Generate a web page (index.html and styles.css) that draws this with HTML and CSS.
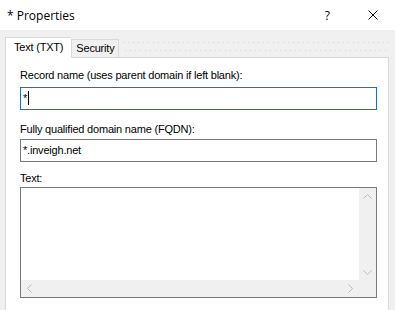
FILE: index.html
```html
<!DOCTYPE html>
<html lang="en">
<head>
    <meta charset="UTF-8">
    <title>* Properties</title>
    <link rel="stylesheet" href="styles.css">
</head>
<body>
    <div class="titlebar">
        <span class="title">* Properties</span>
        <span class="help">?</span>
        <svg class="close" viewBox="0 0 10 10" width="10" height="10">
            <path d="M0.5 0.5L9.5 9.5M9.5 0.5L0.5 9.5" stroke="#000" stroke-width="1" fill="none"/>
        </svg>
    </div>

    <div class="dialog">
        <div class="tabs">
            <div class="tab active">Text (TXT)</div>
            <div class="tab">Security</div>
            <div class="tab-fill"></div>
        </div>

        <div class="page">
            <label class="field-label">Record name (uses parent domain if left blank):</label>
            <div class="input focused">*<span class="caret"></span></div>

            <label class="field-label fqdn">Fully qualified domain name (FQDN):</label>
            <div class="input">*.inveigh.net</div>

            <label class="field-label text">Text:</label>
            <div class="textbox">
                <div class="text-area"></div>
                <div class="vscroll">
                    <svg viewBox="0 0 9 5" width="9" height="5"><path d="M0.5 4.5L4.5 0.5L8.5 4.5" stroke="#b9bdbd" fill="none"/></svg>
                    <svg viewBox="0 0 9 5" width="9" height="5"><path d="M0.5 0.5L4.5 4.5L8.5 0.5" stroke="#b9bdbd" fill="none"/></svg>
                </div>
                <div class="hscroll">
                    <svg viewBox="0 0 5 9" width="5" height="9"><path d="M4.5 0.5L0.5 4.5L4.5 8.5" stroke="#b9bdbd" fill="none"/></svg>
                    <svg viewBox="0 0 5 9" width="5" height="9"><path d="M0.5 0.5L4.5 4.5L0.5 8.5" stroke="#b9bdbd" fill="none"/></svg>
                </div>
                <div class="corner"></div>
            </div>
        </div>
    </div>
</body>
</html>
```

FILE: styles.css
```css
body {
    margin: 0;
    width: 395px;
    height: 310px;
    overflow: hidden;
    display: flex;
    flex-direction: column;
    font-family: "Liberation Sans", Arial, sans-serif;
    font-size: 11px;
    letter-spacing: -0.2px;
    color: #000;
    background-color: #f0f0f0;
}

.titlebar {
    height: 30px;
    flex-shrink: 0;
    background-color: #fff;
    display: flex;
    align-items: center;
    letter-spacing: 0;
}

.title {
    font-family: "Open Sans", "Noto Sans", sans-serif;
    font-size: 12px;
    padding-left: 7px;
    flex: 1;
}

.help {
    font-family: "Open Sans", "Noto Sans", sans-serif;
    font-size: 12px;
    margin-right: 38px;
}

.close {
    margin-right: 17px;
}

.dialog {
    flex: 1;
    display: flex;
    flex-direction: column;
    padding: 7px 6px 0 5px;
    min-height: 0;
}

.tabs {
    display: flex;
    align-items: flex-end;
    height: 21px;
    margin-bottom: -1px;
    position: relative;
    z-index: 1;
}

.tab {
    height: 17px;
    line-height: 17px;
    padding: 0 4px;
    border: 1px solid #d9d9d9;
    border-bottom: none;
    background-color: #f0f0f0;
    margin-bottom: 1px;
}

.tab.active {
    height: 20px;
    line-height: 18px;
    padding: 0 8px;
    background-color: #fff;
    margin-bottom: 0;
    border-right: none;
}

.tab-fill {
    flex: 1;
    align-self: stretch;
    margin: 5px 0 4px 4px;
    background-image:
        linear-gradient(90deg, #d6d6d6 1px, transparent 1px),
        linear-gradient(90deg, #d6d6d6 1px, transparent 1px);
    background-size: 5px 1px, 5px 1px;
    background-position: 0 0, 2px 8px;
    background-repeat: repeat-x;
}

.page {
    flex: 1;
    background-color: #fff;
    border: 1px solid #d9d9d9;
    border-bottom: none;
    padding: 10px 11px 0 14px;
}

.field-label {
    display: block;
    line-height: 15px;
    margin-bottom: 4px;
}

.field-label.fqdn {
    margin-top: 12px;
    margin-bottom: 2px;
}

.field-label.text {
    margin-top: 9px;
    margin-bottom: 1px;
}

.input {
    height: 21px;
    line-height: 21px;
    border: 1px solid #7a7a7a;
    padding-left: 2px;
}

.input.focused {
    border-color: #0078d7;
}

.caret {
    display: inline-block;
    width: 1px;
    height: 14px;
    background-color: #000;
    vertical-align: -3px;
    margin-left: 1px;
}

.textbox {
    height: 109px;
    border: 1px solid #7a7a7a;
    display: grid;
    grid-template-columns: 1fr 17px;
    grid-template-rows: 1fr 17px;
}

.vscroll {
    background-color: #f0f0f0;
    display: flex;
    flex-direction: column;
    justify-content: space-between;
    align-items: center;
    padding: 6px 0 5px;
}

.hscroll {
    background-color: #f0f0f0;
    display: flex;
    justify-content: space-between;
    align-items: center;
    padding: 0 6px;
}

.corner {
    background-color: #f0f0f0;
}
```
